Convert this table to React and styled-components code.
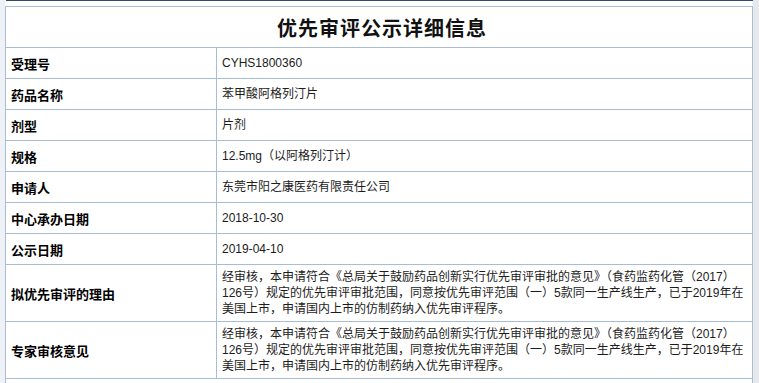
import React from "react";
import styled, { createGlobalStyle } from "styled-components";

const GlobalStyle = createGlobalStyle`
  *, *::before, *::after {
    box-sizing: border-box;
  }
  html, body {
    margin: 0;
    padding: 0;
    background: #e6e8eb;
  }
  body {
    font-family: "Liberation Sans", "Noto Sans CJK SC", sans-serif;
  }
`;

const Page = styled.div`
  display: flex;
  min-height: 383px;
`;

const Gutter = styled.div`
  width: ${(p) => p.width}px;
  flex: ${(p) => (p.grow ? 1 : "none")};
  background: ${(p) => p.bg};
`;

const Sheet = styled.div`
  width: 748px;
  background: #fff;
  display: flex;
  flex-direction: column;
`;

const TopRule = styled.div`
  height: 1px;
  margin-left: 1px;
  background: #34496a;
  margin-bottom: 5px;
`;

const Panel = styled.div`
  flex: 1;
  border-left: 1px solid #a8bdd4;
  border-right: 1px solid #a8bdd4;
  border-top: 1px solid #a8bdd4;
`;

const Grid = styled.div`
  display: grid;
  grid-template-columns: 211px 1fr;
`;

const Title = styled.div`
  grid-column: 1 / span 2;
  height: 41px;
  border-bottom: 1px solid #a8bdd4;
  display: flex;
  align-items: center;
  justify-content: center;
  font-family: "Noto Sans CJK SC", sans-serif;
  font-size: 20px;
  font-weight: bold;
  letter-spacing: 1px;
  color: #111;
  padding-left: 6px;
`;

const Label = styled.div`
  height: ${(p) => p.h}px;
  border-right: 1px solid #a8bdd4;
  border-bottom: 1px solid #a8bdd4;
  display: flex;
  align-items: center;
  padding-left: 5px;
  font-family: "Noto Sans CJK SC", sans-serif;
  font-size: 13px;
  font-weight: bold;
  color: #000;
`;

const Value = styled.div`
  height: ${(p) => p.h}px;
  border-bottom: 1px solid #a8bdd4;
  display: flex;
  flex-direction: column;
  justify-content: center;
  padding-left: 5px;
  font-size: 12px;
  line-height: 16px;
  color: #1c1c1c;
`;

const Line = styled.span`
  display: block;
  white-space: nowrap;
`;

const rows = [
  ["受理号", "CYHS1800360"],
  ["药品名称", "苯甲酸阿格列汀片"],
  ["剂型", "片剂"],
  ["规格", "12.5mg（以阿格列汀计）"],
  ["申请人", "东莞市阳之康医药有限责任公司"],
  ["中心承办日期", "2018-10-30"],
  ["公示日期", "2019-04-10"],
];

const opinion = [
  "经审核，本申请符合《总局关于鼓励药品创新实行优先审评审批的意见》（食药监药化管（2017）",
  "126号）规定的优先审评审批范围，同意按优先审评范围（一）5款同一生产线生产，已于2019年在",
  "美国上市，申请国内上市的仿制药纳入优先审评程序。",
];

const longRows = [
  ["拟优先审评的理由", opinion],
  ["专家审核意见", opinion],
];

export default function App() {
  return (
    <Page>
      <GlobalStyle />
      <Gutter width={5} bg="#eef1f5" />
      <Sheet>
        <TopRule />
        <Panel>
          <Grid>
            <Title>优先审评公示详细信息</Title>
            {rows.map(([label, value]) => (
              <React.Fragment key={label}>
                <Label h={31}>{label}</Label>
                <Value h={31}>
                  <Line>{value}</Line>
                </Value>
              </React.Fragment>
            ))}
            {longRows.map(([label, lines]) => (
              <React.Fragment key={label}>
                <Label h={57}>{label}</Label>
                <Value h={57}>
                  {lines.map((l, i) => (
                    <Line key={i}>{l}</Line>
                  ))}
                </Value>
              </React.Fragment>
            ))}
          </Grid>
        </Panel>
      </Sheet>
      <Gutter grow bg="#e6e8eb" />
    </Page>
  );
}
